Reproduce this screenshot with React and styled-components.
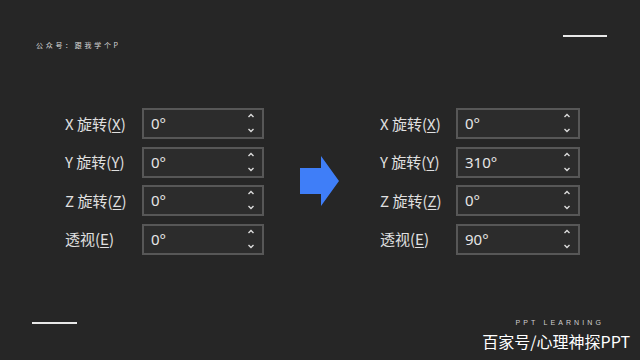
import React from 'react'
import styled, { createGlobalStyle } from 'styled-components'

const Global = createGlobalStyle`
  html, body { margin: 0; padding: 0; background: #262626; }
  * { box-sizing: border-box; }
`

const Slide = styled.div`
  width: 640px;
  height: 360px;
  background: #262626;
  display: flex;
  flex-direction: column;
  padding-top: 35px;
  font-family: "Noto Sans", "Noto Sans CJK SC", sans-serif;
  color: #e2e2e2;
  overflow: hidden;
`

const Header = styled.div`
  height: 16px;
  display: flex;
  justify-content: space-between;
  align-items: flex-start;
  padding: 0 33px 0 36px;
`

const Account = styled.div`
  margin-top: 5px;
  font-size: 7px;
  line-height: 10px;
  letter-spacing: 2.7px;
  color: #d8d8d8;
  font-family: "Noto Sans CJK SC", sans-serif;
`

const Rule = styled.div`
  width: ${p => p.$w}px;
  height: 2px;
  background: #e8e8e8;
  margin-top: ${p => p.$top || 0}px;
`

const Main = styled.div`
  margin-top: 57px;
  display: flex;
  align-items: center;
  padding-left: 65px;
`

const Panel = styled.div`
  display: flex;
  flex-direction: column;
  gap: 7.5px;
`

const Row = styled.div`
  display: flex;
  align-items: center;
  height: 31px;
`

const Label = styled.div`
  width: ${p => p.$w}px;
  font-size: 15px;
  font-family: "Noto Sans CJK SC", sans-serif;
  color: #e0e0e0;
  margin-top: -1px;
  u { text-underline-offset: 2px; text-decoration-thickness: 1px; }
`

const Field = styled.div`
  width: ${p => p.$w}px;
  height: 31px;
  border: 2px solid #575757;
  background: #2c2c2c;
  display: flex;
  align-items: center;
  justify-content: space-between;
  padding: 0 7px 1px 7px;
  font-size: 15px;
  color: #e6e6e6;
`

const Spin = styled.svg`
  display: block;
`

const ArrowWrap = styled.div`
  margin: 0 40px 0 36px;
  display: flex;
`

const Footer = styled.div`
  margin-top: auto;
  display: flex;
  justify-content: space-between;
  align-items: flex-start;
  padding: 0 10px 8px 32px;
`

const Brand = styled.div`
  display: flex;
  flex-direction: column;
  align-items: flex-end;
`

const Learning = styled.div`
  font-size: 7px;
  line-height: 10px;
  letter-spacing: 3.1px;
  margin-right: 26px;
  color: #d0d0d0;
  font-family: "Liberation Sans", sans-serif;
`

const Mark = styled.div`
  margin-top: 2px;
  font-size: 16px;
  line-height: 22px;
  color: #ffffff;
  font-family: "Noto Sans CJK SC", sans-serif;
`

const Spinner = () => (
  <Spin width="8" height="22" viewBox="0 0 8 22">
    <path d="M1.5 5 L4 2.5 L6.5 5" fill="none" stroke="#dcdcdc" strokeWidth="1.4" />
    <path d="M1.5 17 L4 19.5 L6.5 17" fill="none" stroke="#dcdcdc" strokeWidth="1.4" />
  </Spin>
)

const rowsOf = vals => [
  { axis: 'X', name: '旋转', val: vals[0] },
  { axis: 'Y', name: '旋转', val: vals[1] },
  { axis: 'Z', name: '旋转', val: vals[2] },
  { axis: null, name: '透视', key: 'E', val: vals[3] },
]

function Rotation({ vals, labelW, fieldW }) {
  return (
    <Panel>
      {rowsOf(vals).map((r, i) => (
        <Row key={i}>
          <Label $w={labelW}>
            {r.axis ? <>{r.axis} {r.name}(<u>{r.axis}</u>)</> : <>{r.name}(<u>{r.key}</u>)</>}
          </Label>
          <Field $w={fieldW}>
            <span>{r.val}</span>
            <Spinner />
          </Field>
        </Row>
      ))}
    </Panel>
  )
}

export default function App() {
  return (
    <Slide>
      <Global />
      <Header>
        <Account>公众号：跟我学个P</Account>
        <Rule $w={44} />
      </Header>
      <Main>
        <Rotation vals={['0°', '0°', '0°', '0°']} labelW={77} fieldW={122} />
        <ArrowWrap>
          <svg width="40" height="50" viewBox="0 0 40 50">
            <polygon points="0,12 21,12 21,0 39,25 21,50 21,38 0,38" fill="#3f7ef8" />
          </svg>
        </ArrowWrap>
        <Rotation vals={['0°', '310°', '0°', '90°']} labelW={76} fieldW={124} />
      </Main>
      <Footer>
        <Rule $w={45} $top={4} />
        <Brand>
          <Learning>PPT LEARNING</Learning>
          <Mark>百家号/心理神探PPT</Mark>
        </Brand>
      </Footer>
    </Slide>
  )
}
